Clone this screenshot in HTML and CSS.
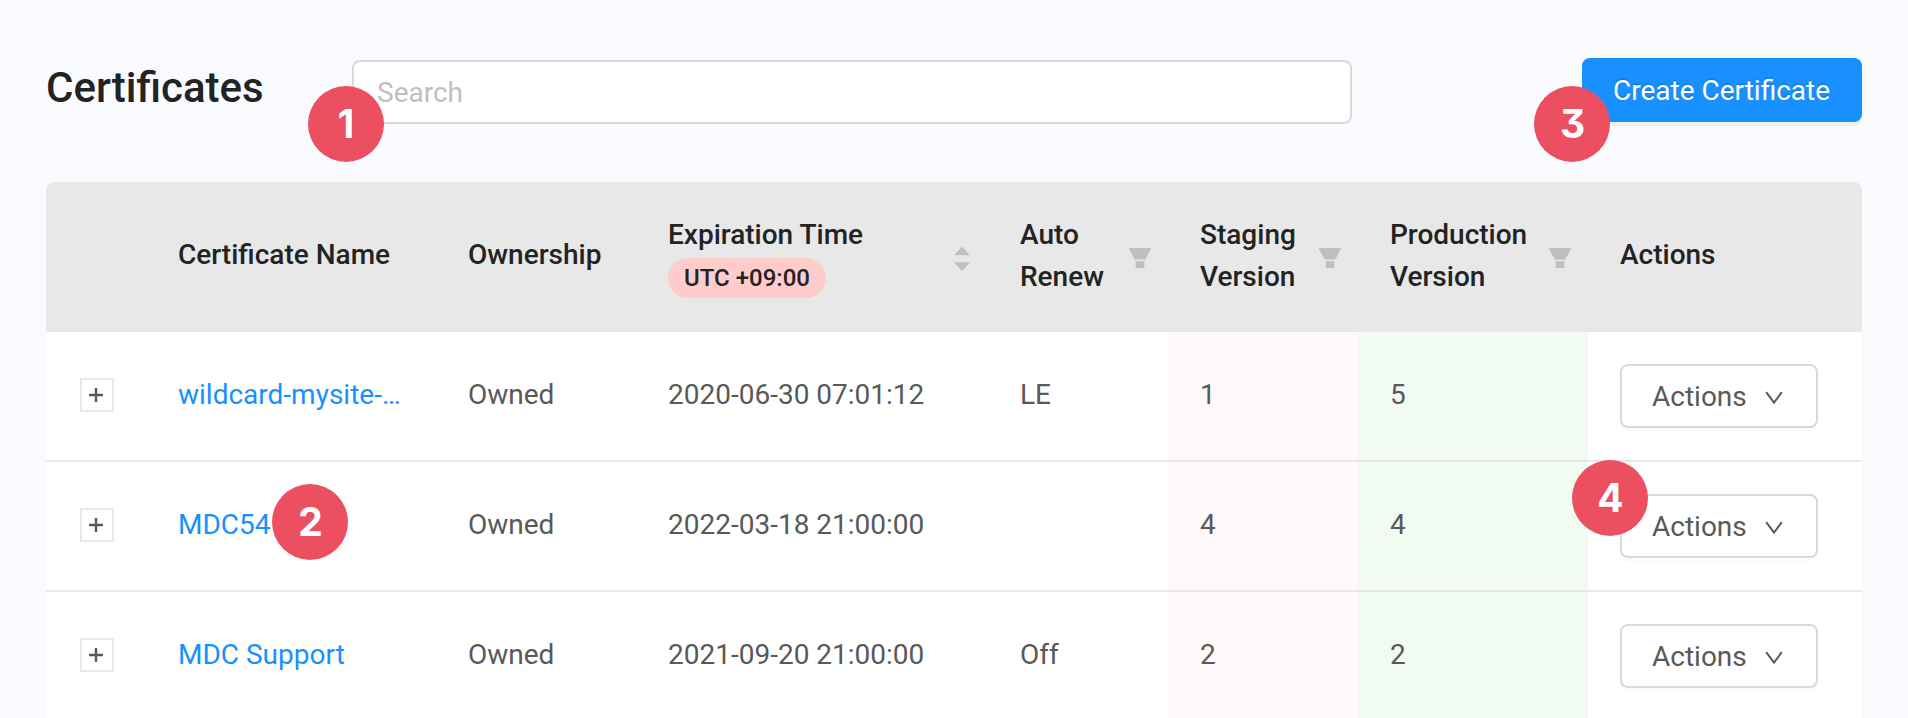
FILE: index.html
```html
<!DOCTYPE html>
<html lang="en">
<head>
<meta charset="utf-8">
<title>Certificates</title>
<link rel="stylesheet" href="styles.css">
</head>
<body>
<svg class="defs" width="0" height="0" aria-hidden="true">
  <symbol id="filter" viewBox="0 0 22 20"><path d="M0 0H22V1L16.2 11.6H5.8L0 1Z"/><path d="M6.7 13.2H15.3V20H6.7Z"/></symbol>
  <symbol id="plus" viewBox="0 0 14 14"><path d="M7 0V14M0 7H14"/></symbol>
  <symbol id="chevron" viewBox="0 0 18 14"><path d="M1.2 1.2L9 11.6L16.8 1.2"/></symbol>
  <symbol id="sort" viewBox="0 0 16 26"><path d="M8 0.4L16 9.3H0Z"/><path d="M0 16.2H16L8 25.2Z"/></symbol>
</svg>
<main class="page">
  <header class="toolbar">
    <h1 class="title">Certificates</h1>
    <div class="search-wrap">
      <input class="search" type="text" placeholder="Search">
      <span class="badge badge-search">1</span>
    </div>
    <div class="create-wrap">
      <button class="create">Create Certificate</button>
      <span class="badge badge-create">3</span>
    </div>
  </header>
  <section class="table">
    <div class="row head">
      <div class="cell"></div>
      <div class="cell single">Certificate Name</div>
      <div class="cell single">Ownership</div>
      <div class="cell"><div>Expiration Time<span class="zone">UTC +09:00</span></div><svg class="sort"><use href="#sort"/></svg></div>
      <div class="cell"><div>Auto<br>Renew</div><svg class="filter"><use href="#filter"/></svg></div>
      <div class="cell"><div>Staging<br>Version</div><svg class="filter"><use href="#filter"/></svg></div>
      <div class="cell"><div>Production<br>Version</div><svg class="filter"><use href="#filter"/></svg></div>
      <div class="cell single">Actions</div>
    </div>
    <div class="row">
      <div class="cell toggle"><span class="expand"><svg class="plus"><use href="#plus"/></svg></span></div>
      <div class="cell"><a class="link">wildcard-mysite-…</a></div>
      <div class="cell">Owned</div>
      <div class="cell">2020-06-30 07:01:12</div>
      <div class="cell">LE</div>
      <div class="cell staging">1</div>
      <div class="cell production">5</div>
      <div class="cell menu"><button class="actions">Actions<svg class="chevron"><use href="#chevron"/></svg></button></div>
    </div>
    <div class="row">
      <div class="cell toggle"><span class="expand"><svg class="plus"><use href="#plus"/></svg></span></div>
      <div class="cell"><a class="link">MDC54</a><span class="badge badge-name">2</span></div>
      <div class="cell">Owned</div>
      <div class="cell">2022-03-18 21:00:00</div>
      <div class="cell"></div>
      <div class="cell staging">4</div>
      <div class="cell production">4</div>
      <div class="cell menu"><button class="actions">Actions<svg class="chevron"><use href="#chevron"/></svg></button><span class="badge badge-actions">4</span></div>
    </div>
    <div class="row">
      <div class="cell toggle"><span class="expand"><svg class="plus"><use href="#plus"/></svg></span></div>
      <div class="cell"><a class="link">MDC Support</a></div>
      <div class="cell">Owned</div>
      <div class="cell">2021-09-20 21:00:00</div>
      <div class="cell">Off</div>
      <div class="cell staging">2</div>
      <div class="cell production">2</div>
      <div class="cell menu"><button class="actions">Actions<svg class="chevron"><use href="#chevron"/></svg></button></div>
    </div>
  </section>
</main>
</body>
</html>
```
FILE: styles.css
```css
* { box-sizing: border-box; }

body {
  margin: 0;
  height: 718px;
  overflow: hidden;
  background: #fafbff;
  color: #595959;
  font: 28px/42px Roboto, sans-serif;
}

.defs { display: block; }

.page { padding: 58px 46px 0; }

.toolbar {
  display: flex;
  align-items: flex-start;
  height: 124px;
}

.title {
  width: 306px;
  margin: 0;
  font-size: 42px;
  font-weight: 500;
  line-height: 60px;
  color: #232323;
}

.search-wrap {
  position: relative;
  width: 1000px;
  margin-top: 2px;
}

.search {
  display: block;
  width: 100%;
  height: 64px;
  padding: 0 23px;
  border: 2px solid #d9d9d9;
  border-radius: 8px;
  background: #fff;
  font: inherit;
}

.search::placeholder { color: #bfbfbf; opacity: 1; }

.create-wrap {
  position: relative;
  width: 280px;
  margin-left: auto;
}

.create {
  display: block;
  width: 100%;
  height: 64px;
  padding: 2px 1px 0 0;
  border: 0;
  border-radius: 8px;
  background: #1890ff;
  color: #fff;
  font: inherit;
  text-shadow: 0 -2px 0 rgba(0, 0, 0, 0.12);
  box-shadow: 0 4px 0 rgba(0, 0, 0, 0.045);
}

.table {
  background: #fff;
  border-radius: 8px 8px 0 0;
}

.row {
  display: grid;
  grid-template-columns: 100px 290px 200px 352px 180px 190px 230px 274px;
  height: 130px;
  border-bottom: 2px solid #e8e8e8;
}

.head {
  height: 150px;
  border-radius: 8px 8px 0 0;
  background: #e8e8e8;
  color: #232323;
  font-weight: 500;
}

.cell {
  position: relative;
  display: flex;
  align-items: center;
  padding: 0 17px 2px 32px;
  white-space: nowrap;
}

.head .cell { justify-content: space-between; padding-bottom: 0; }
.head .single { padding-bottom: 2px; }

.staging { background: #fff9f9; }
.production { background: #f1fbf2; }
.row .toggle { padding: 0 0 2px 34px; }
.row .menu { padding-bottom: 0; }

.zone {
  display: block;
  width: 158px;
  height: 40px;
  margin-top: 2px;
  border-radius: 20px;
  background: #ffcccc;
  font-size: 24px;
  line-height: 40px;
  text-align: center;
}

.sort {
  width: 16px;
  height: 26px;
  margin: 6px 1px 0 0;
  fill: #bfbfbf;
}

.filter {
  width: 22px;
  height: 20px;
  margin-top: 4px;
  fill: #bfbfbf;
}

.expand {
  display: flex;
  align-items: center;
  justify-content: center;
  width: 34px;
  height: 34px;
  padding: 0 2px 1px 0;
  border: 2px solid #e8e8e8;
  background: #fff;
}

.plus {
  width: 14px;
  height: 14px;
  fill: none;
  stroke: #595959;
  stroke-width: 2.4;
}

.link { color: #1890ff; }

.actions {
  display: flex;
  align-items: center;
  width: 198px;
  height: 64px;
  padding: 2px 33px 0 30px;
  border: 2px solid #d9d9d9;
  border-radius: 8px;
  background: #fff;
  color: #595959;
  font: inherit;
  box-shadow: 0 4px 0 rgba(0, 0, 0, 0.015);
}

.chevron {
  width: 18px;
  height: 14px;
  margin: 2px 0 0 auto;
  fill: none;
  stroke: #595959;
  stroke-width: 2;
}

/* Numbered callouts */
.badge {
  position: absolute;
  z-index: 1;
  width: 76px;
  height: 76px;
  padding-left: 1px;
  border-radius: 50%;
  background: #ec4f5f;
  color: #fff;
  font: 700 39px/76px Inter, sans-serif;
  font-feature-settings: "cv09" 1;
  text-align: center;
}

.badge-search { left: -44px; top: 26px; padding-left: 0; }
.badge-create { left: -48px; top: 28px; }
.badge-name { left: 126px; top: 22px; }
.badge-actions { left: -16px; top: -2px; }
```
